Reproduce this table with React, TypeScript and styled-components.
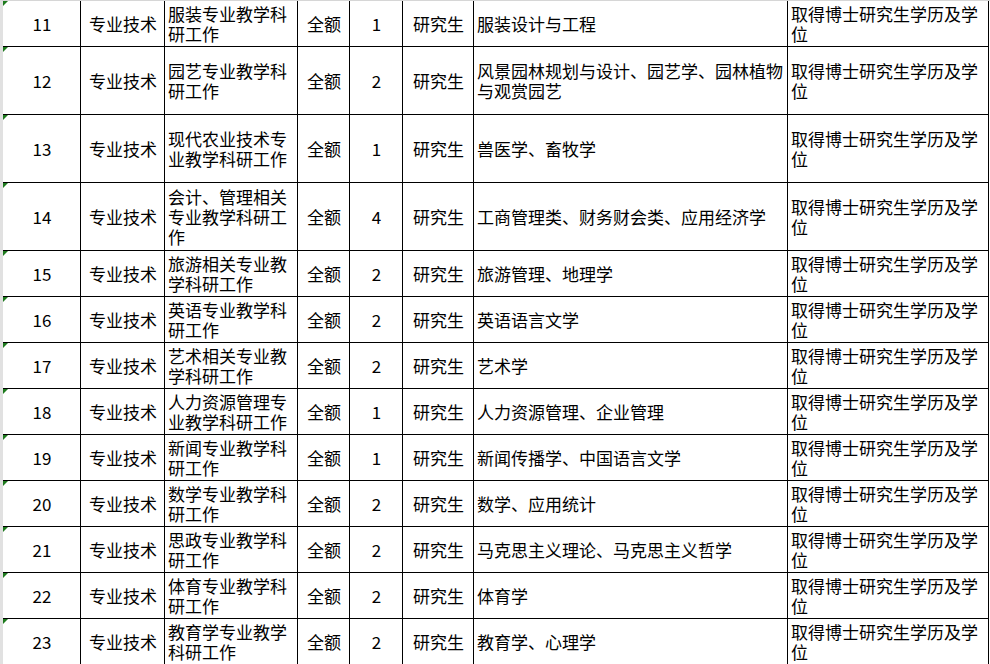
import React from "react";
import styled, { createGlobalStyle } from "styled-components";

type Row = {
  no: string;
  post: string;
  quota: string;
  count: string;
  edu: string;
  major: string;
  tall?: boolean;
};

const rows: Row[] = [
  { no: "11", post: "服装专业教学科研工作", quota: "全额", count: "1", edu: "研究生", major: "服装设计与工程" },
  { no: "12", post: "园艺专业教学科研工作", quota: "全额", count: "2", edu: "研究生", major: "风景园林规划与设计、园艺学、园林植物与观赏园艺", tall: true },
  { no: "13", post: "现代农业技术专业教学科研工作", quota: "全额", count: "1", edu: "研究生", major: "兽医学、畜牧学", tall: true },
  { no: "14", post: "会计、管理相关专业教学科研工作", quota: "全额", count: "4", edu: "研究生", major: "工商管理类、财务财会类、应用经济学", tall: true },
  { no: "15", post: "旅游相关专业教学科研工作", quota: "全额", count: "2", edu: "研究生", major: "旅游管理、地理学" },
  { no: "16", post: "英语专业教学科研工作", quota: "全额", count: "2", edu: "研究生", major: "英语语言文学" },
  { no: "17", post: "艺术相关专业教学科研工作", quota: "全额", count: "2", edu: "研究生", major: "艺术学" },
  { no: "18", post: "人力资源管理专业教学科研工作", quota: "全额", count: "1", edu: "研究生", major: "人力资源管理、企业管理" },
  { no: "19", post: "新闻专业教学科研工作", quota: "全额", count: "1", edu: "研究生", major: "新闻传播学、中国语言文学" },
  { no: "20", post: "数学专业教学科研工作", quota: "全额", count: "2", edu: "研究生", major: "数学、应用统计" },
  { no: "21", post: "思政专业教学科研工作", quota: "全额", count: "2", edu: "研究生", major: "马克思主义理论、马克思主义哲学" },
  { no: "22", post: "体育专业教学科研工作", quota: "全额", count: "2", edu: "研究生", major: "体育学" },
  { no: "23", post: "教育学专业教学科研工作", quota: "全额", count: "2", edu: "研究生", major: "教育学、心理学" },
];

const App = () => {
  return (
    <>
      <GlobalStyle />
      <Sheet>
        {rows.map((r, i) => (
          <SheetRow key={r.no} $tall={r.tall}>
            <Cell $align="center">
              <TextFlag />
              {r.no}
            </Cell>
            <Cell $align="center">专业技术</Cell>
            <Cell>{r.post}</Cell>
            <Cell $align="center" $selected={i === 0}>
              {r.quota}
            </Cell>
            <Cell $align="center">{r.count}</Cell>
            <Cell $align="center">{r.edu}</Cell>
            <Cell>{r.major}</Cell>
            <Cell>取得博士研究生学历及学位</Cell>
          </SheetRow>
        ))}
      </Sheet>
    </>
  );
};

const GlobalStyle = createGlobalStyle`
  html, body {
    margin: 0;
    padding: 0;
    background: #fff;
    overflow: hidden;
  }
  body {
    font-family: "Noto Sans CJK SC", "Noto Sans", sans-serif;
    font-size: 17px;
    color: #000;
  }
`;

const Sheet = styled.div`
  width: 990px;
  height: 664px;
  box-sizing: border-box;
  border-left: 3px solid #e1e1e1;
  border-top: 1px solid #d6d6d6;
  overflow: hidden;
`;

const SheetRow = styled.div<{ $tall?: boolean }>`
  display: grid;
  grid-template-columns: 78px 84px 133px 52px 53px 71px 314px 201px;
  height: ${(props) => (props.$tall ? 68 : 46)}px;
`;

const Cell = styled.div<{ $align?: "center"; $selected?: boolean }>`
  position: relative;
  display: flex;
  align-items: center;
  justify-content: ${(props) => (props.$align === "center" ? "center" : "flex-start")};
  box-sizing: border-box;
  padding: 0 2px 0 3px;
  border-right: 1px solid #000;
  border-bottom: 1px solid #000;
  line-height: 20px;
  text-align: ${(props) => (props.$align === "center" ? "center" : "left")};
  word-break: break-all;
  box-shadow: ${(props) => (props.$selected ? "0 -1px 0 #1f8b4c" : "none")};
`;

const TextFlag = styled.span`
  position: absolute;
  top: 0;
  left: 0;
  width: 0;
  height: 0;
  border-top: 5px solid #1d7a1d;
  border-right: 5px solid transparent;
`;

export default App;
